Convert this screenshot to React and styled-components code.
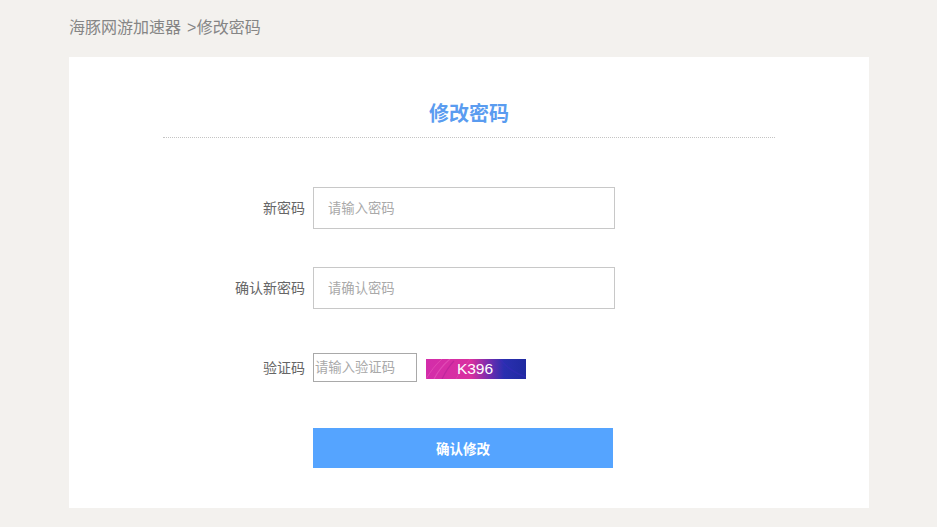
import styled, { createGlobalStyle } from "styled-components";

const GlobalStyle = createGlobalStyle`
    html, body {
        margin: 0;
        padding: 0;
        background: #f3f1ee;
        font-family: "Liberation Sans", "Noto Sans CJK SC", sans-serif;
    }
`;

const App = () => {
    return (
        <>
            <GlobalStyle />
            <Page>
                <Crumbs>海豚网游加速器 &gt;<CrumbCurrent>修改密码</CrumbCurrent></Crumbs>
                <Card>
                    <Title>修改密码</Title>
                    <Form>
                        <Row>
                            <Label>新密码</Label>
                            <Input type="password" placeholder="请输入密码" />
                        </Row>
                        <Row>
                            <Label>确认新密码</Label>
                            <Input type="password" placeholder="请确认密码" />
                        </Row>
                        <CaptchaRow>
                            <Label>验证码</Label>
                            <CaptchaInput type="text" placeholder="请输入验证码" />
                            <Captcha>
                                <CaptchaArt viewBox="0 0 100 20" preserveAspectRatio="none">
                                    <path d="M0 20 C5 12 9 6 16 0" stroke="#f06cc4" strokeWidth="1" fill="none" opacity="0.4" />
                                    <path d="M8 20 C12 12 17 6 24 0" stroke="#f47fd0" strokeWidth="1.2" fill="none" opacity="0.35" />
                                    <path d="M16 20 C19 14 22 8 28 2" stroke="#a01c90" strokeWidth="1.2" fill="none" opacity="0.4" />
                                    <path d="M30 20 C33 14 38 8 44 0" stroke="#f06cc4" strokeWidth="1" fill="none" opacity="0.25" />
                                    <path d="M74 0 C80 8 88 14 100 18" stroke="#3d2bc0" strokeWidth="1.5" fill="none" opacity="0.4" />
                                </CaptchaArt>
                                <CaptchaText>K396</CaptchaText>
                            </Captcha>
                        </CaptchaRow>
                        <Submit type="button">确认修改</Submit>
                    </Form>
                </Card>
            </Page>
        </>
    );
};

export default App;

const Page = styled.div`
    width: 800px;
    height: 527px;
    margin-left: 69px;
    overflow: hidden;
`;

const Crumbs = styled.div`
    height: 57px;
    padding-top: 16px;
    box-sizing: border-box;
    font-size: 16px;
    line-height: 24px;
    color: #858585;
    word-spacing: 1.5px;
`;

const CrumbCurrent = styled.span`
    margin-left: 0.5px;
`;

const Card = styled.div`
    height: 451px;
    background: #fff;
    padding: 38px 94px 0;
    box-sizing: border-box;
`;

const Title = styled.h1`
    margin: 0;
    height: 43px;
    box-sizing: border-box;
    border-bottom: 1px dotted #c4c4c4;
    font-size: 20px;
    line-height: 38px;
    font-weight: bold;
    text-align: center;
    color: #5a9cf0;
`;

const Form = styled.form`
    display: flex;
    flex-direction: column;
    margin-top: 49px;
`;

const Row = styled.div`
    display: flex;
    align-items: center;
    gap: 8px;
    height: 42px;
    margin-bottom: 38px;
`;

const CaptchaRow = styled(Row)`
    height: 29px;
    margin-top: 6px;
    margin-bottom: 46px;
`;

const Label = styled.label`
    width: 142px;
    padding-bottom: 2px;
    text-align: right;
    font-size: 14px;
    color: #666;
`;

const Input = styled.input`
    width: 302px;
    height: 42px;
    padding: 0 14px;
    box-sizing: border-box;
    border: 1px solid #c8c8c8;
    outline: none;
    font-family: inherit;
    font-size: 13.33px;
    color: #666;

    &::placeholder {
        color: #a9a9a9;
        opacity: 1;
    }
`;

const CaptchaInput = styled(Input)`
    width: 104px;
    height: 29px;
    padding: 0 1px;
    border-color: #a9a9a9;
`;

const Captcha = styled.div`
    position: relative;
    width: 100px;
    height: 20px;
    margin-left: 1px;
    margin-top: 2px;
    display: flex;
    align-items: center;
    justify-content: center;
    background: linear-gradient(90deg, #d32daa 0%, #d9309f 45%, #7a2cae 62%, #2a2fb0 78%, #1f2aa0 100%);
`;

const CaptchaArt = styled.svg`
    position: absolute;
    inset: 0;
    width: 100%;
    height: 100%;
`;

const CaptchaText = styled.span`
    position: relative;
    left: -1px;
    font-family: "Liberation Sans", sans-serif;
    font-size: 15.5px;
    color: #fff;
`;

const Submit = styled.button`
    width: 300px;
    height: 40px;
    margin-left: 150px;
    padding: 0;
    border: none;
    cursor: pointer;
    background: #55a4ff;
    color: #fff;
    font-family: inherit;
    font-size: 13.5px;
    font-weight: bold;
`;
